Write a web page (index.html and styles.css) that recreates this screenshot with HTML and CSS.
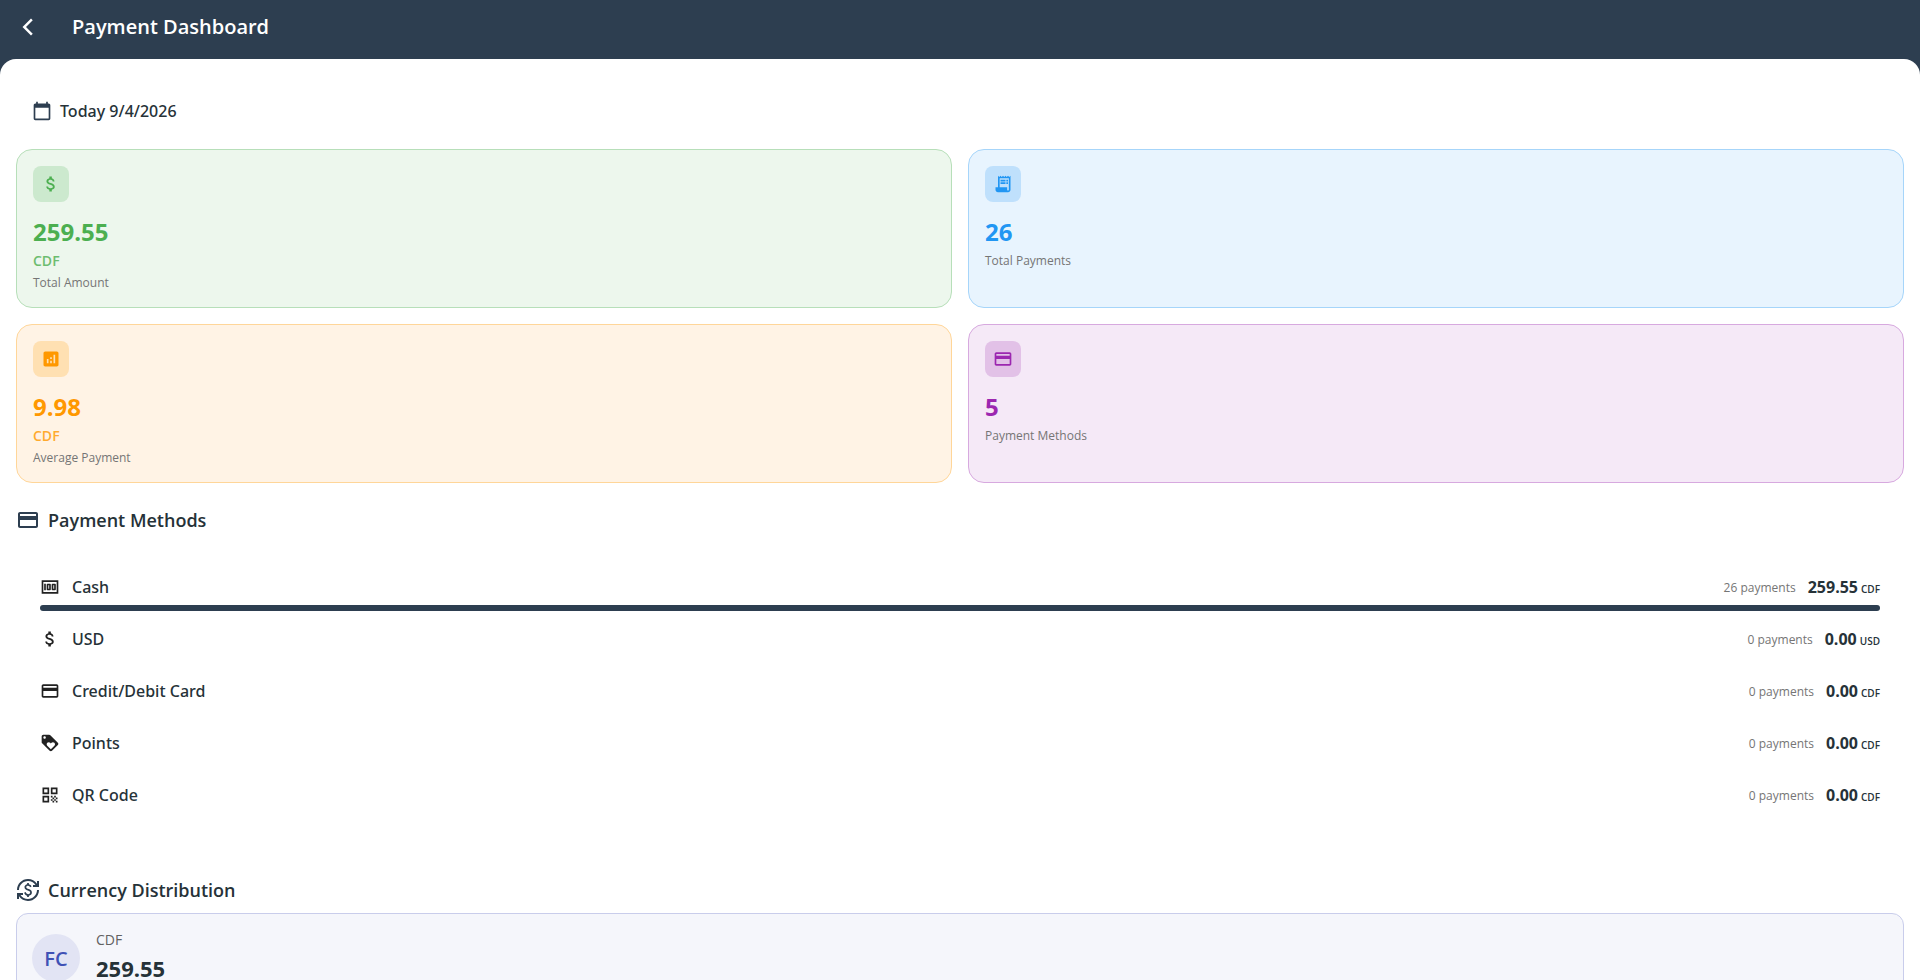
FILE: index.html
```html
<!DOCTYPE html>
<html lang="en">
<head>
    <meta charset="UTF-8">
    <meta name="viewport" content="width=device-width, initial-scale=1.0">
    <title>Payment Dashboard</title>
    <link rel="stylesheet" href="styles.css">
</head>
<body>
    <svg class="sprite" aria-hidden="true">
        <symbol id="icon-card" viewBox="0 0 24 24">
            <path d="M20 4H4c-1.11 0-1.99.89-1.99 2L2 18c0 1.11.89 2 2 2h16c1.11 0 2-.89 2-2V6c0-1.11-.89-2-2-2zm0 14H4v-6h16v6zm0-10H4V6h16v2z"/>
        </symbol>
        <symbol id="icon-dollar" viewBox="0 0 24 24">
            <path d="M11.8 10.9c-2.27-.59-3-1.2-3-2.15 0-1.09 1.01-1.85 2.7-1.85 1.78 0 2.44.85 2.5 2.1h2.21c-.07-1.72-1.12-3.3-3.21-3.81V3h-3v2.16c-1.94.42-3.5 1.68-3.5 3.61 0 2.31 1.91 3.46 4.7 4.13 2.5.6 3 1.48 3 2.41 0 .69-.49 1.79-2.7 1.79-2.06 0-2.87-.92-2.98-2.1h-2.2c.12 2.19 1.76 3.42 3.68 3.83V21h3v-2.15c1.95-.37 3.5-1.5 3.5-3.55 0-2.84-2.43-3.81-4.7-4.4z"/>
        </symbol>
    </svg>

    <header class="app-bar">
        <button class="back-btn" type="button" aria-label="Back">
            <svg class="icon" viewBox="0 0 24 24"><path d="M17.7 3.9 15.6 1.800 5.4 12l10.200 10.200 2.100-2.100L9.600 12z"/></svg>
        </button>
        <h1>Payment Dashboard</h1>
    </header>

    <main class="content">
        <button class="date-btn" type="button">
            <svg class="icon" viewBox="0 0 24 24"><path d="M20 3h-1V1h-2v2H7V1H5v2H4c-1.1 0-2 .9-2 2v16c0 1.1.9 2 2 2h16c1.1 0 2-.9 2-2V5c0-1.1-.9-2-2-2zm0 18H4V8h16v13z"/></svg>
            Today 9/4/2026
        </button>

        <section class="stats">
            <div class="stat green">
                <div class="stat-icon"><svg class="icon"><use href="#icon-dollar"/></svg></div>
                <div class="stat-value">259.55</div>
                <div class="stat-unit">CDF</div>
                <div class="stat-label">Total Amount</div>
            </div>
            <div class="stat blue">
                <div class="stat-icon">
                    <svg class="icon" viewBox="0 0 24 24"><path d="M19.5 3.5 18 2l-1.500 1.500L15 2l-1.500 1.500L12 2l-1.500 1.500L9 2 7.500 3.500 6 2v14H3v3c0 1.660 1.340 3 3 3h12c1.660 0 3-1.340 3-3V2l-1.500 1.500zM19 19c0 .55-.45 1-1 1s-1-.45-1-1v-3H8V5h11v14z"/><path d="M9 7h6v2H9zM16 7h2v2h-2zM9 10h6v2H9zM16 10h2v2h-2z"/></svg>
                </div>
                <div class="stat-value">26</div>
                <div class="stat-label">Total Payments</div>
            </div>
            <div class="stat orange">
                <div class="stat-icon">
                    <svg class="icon" viewBox="0 0 24 24"><path d="M19 3H5c-1.100 0-2 .9-2 2v14c0 1.100.9 2 2 2h14c1.100 0 2-.9 2-2V5c0-1.100-.9-2-2-2zM9 17H7v-5h2v5zm4 0h-2v-3h2v3zm0-5h-2v-2h2v2zm4 5h-2V7h2v10z"/></svg>
                </div>
                <div class="stat-value">9.98</div>
                <div class="stat-unit">CDF</div>
                <div class="stat-label">Average Payment</div>
            </div>
            <div class="stat purple">
                <div class="stat-icon"><svg class="icon"><use href="#icon-card"/></svg></div>
                <div class="stat-value">5</div>
                <div class="stat-label">Payment Methods</div>
            </div>
        </section>

        <section class="methods">
            <h2 class="section-title"><svg class="icon"><use href="#icon-card"/></svg>Payment Methods</h2>
            <ul class="method-list">
                <li class="method">
                    <div class="method-row">
                        <svg class="icon" viewBox="0 0 24 24"><path d="M15 16h3c.55 0 1-.45 1-1V9c0-.55-.45-1-1-1h-3c-.55 0-1 .45-1 1v6c0 .55.45 1 1 1zm1-6h1v4h-1v-4zM9 16h3c.55 0 1-.45 1-1V9c0-.55-.45-1-1-1H9c-.55 0-1 .45-1 1v6c0 .55.45 1 1 1zm1-6h1v4h-1v-4zM5 8h2v8H5zM2 4v16h20V4H2zm2 14V6h16v12H4z"/></svg>
                        <span class="method-name">Cash</span>
                        <span class="method-count">26 payments</span>
                        <span class="method-amount">259.55<small>CDF</small></span>
                    </div>
                    <div class="bar"><div class="bar-fill" style="width: 100%"></div></div>
                </li>
                <li class="method">
                    <div class="method-row">
                        <svg class="icon"><use href="#icon-dollar"/></svg>
                        <span class="method-name">USD</span>
                        <span class="method-count">0 payments</span>
                        <span class="method-amount">0.00<small>USD</small></span>
                    </div>
                    <div class="bar"><div class="bar-fill" style="width: 0%"></div></div>
                </li>
                <li class="method">
                    <div class="method-row">
                        <svg class="icon"><use href="#icon-card"/></svg>
                        <span class="method-name">Credit/Debit Card</span>
                        <span class="method-count">0 payments</span>
                        <span class="method-amount">0.00<small>CDF</small></span>
                    </div>
                    <div class="bar"><div class="bar-fill" style="width: 0%"></div></div>
                </li>
                <li class="method">
                    <div class="method-row">
                        <svg class="icon" viewBox="0 0 24 24"><path d="M21.410 11.580l-9-9C12.050 2.220 11.550 2 11 2H4c-1.100 0-2 .9-2 2v7c0 .55.22 1.050.59 1.420l9 9c.36.36.86.58 1.410.58.55 0 1.050-.22 1.410-.59l7-7c.37-.36.59-.86.59-1.410 0-.55-.23-1.060-.59-1.420zM5.500 7C4.670 7 4 6.330 4 5.500S4.670 4 5.500 4 7 4.670 7 5.500 6.330 7 5.500 7zm11.770 8.270L13 19.540l-4.270-4.270C8.280 14.810 8 14.190 8 13.500c0-1.380 1.120-2.500 2.500-2.500.69 0 1.320.28 1.770.74l.73.72.73-.73c.45-.45 1.080-.73 1.770-.73 1.380 0 2.500 1.120 2.500 2.500 0 .69-.28 1.320-.73 1.770z"/></svg>
                        <span class="method-name">Points</span>
                        <span class="method-count">0 payments</span>
                        <span class="method-amount">0.00<small>CDF</small></span>
                    </div>
                    <div class="bar"><div class="bar-fill" style="width: 0%"></div></div>
                </li>
                <li class="method">
                    <div class="method-row">
                        <svg class="icon" viewBox="0 0 24 24"><path d="M3 11h8V3H3v8zm2-6h4v4H5V5zM3 21h8v-8H3v8zm2-6h4v4H5v-4zM13 3v8h8V3h-8zm6 6h-4V5h4v4zM19 19h2v2h-2zM13 13h2v2h-2zM15 15h2v2h-2zM13 17h2v2h-2zM15 19h2v2h-2zM17 17h2v2h-2zM17 13h2v2h-2zM19 15h2v2h-2z"/></svg>
                        <span class="method-name">QR Code</span>
                        <span class="method-count">0 payments</span>
                        <span class="method-amount">0.00<small>CDF</small></span>
                    </div>
                    <div class="bar"><div class="bar-fill" style="width: 0%"></div></div>
                </li>
            </ul>
        </section>

        <section class="currencies">
            <h2 class="section-title">
                <svg class="icon" viewBox="0 0 24 24"><path d="M12.890 11.100c-1.780-.59-2.640-.96-2.640-1.900 0-1.020 1.110-1.390 1.810-1.390 1.310 0 1.790.99 1.900 1.340l1.580-.67c-.15-.44-.82-1.910-2.660-2.230V5h-1.750v1.260c-2.600.56-2.620 2.850-2.620 2.960 0 2.270 2.250 2.910 3.350 3.310 1.580.56 2.280 1.070 2.280 2.030 0 1.130-1.050 1.610-1.980 1.610-1.820 0-2.340-1.870-2.400-2.090l-1.660.67c.63 2.190 2.280 2.780 3.020 2.960V19h1.750v-1.240c.52-.09 3.020-.59 3.020-3.220.01-1.390-.6-2.610-3-3.440zM3 21H1v-6h6v2H4.520c1.610 2.410 4.360 4 7.480 4 4.970 0 9-4.030 9-9h2c0 6.080-4.920 11-11 11-3.720 0-7.010-1.850-9-4.670V21zM1 12C1 5.920 5.920 1 12 1c3.720 0 7.010 1.850 9 4.670V3h2v6h-6V7h2.480C17.870 4.590 15.120 3 12 3c-4.970 0-9 4.030-9 9H1z"/></svg>
                Currency Distribution
            </h2>
            <div class="currency">
                <div class="currency-badge">FC</div>
                <div class="currency-info">
                    <div class="currency-code">CDF</div>
                    <div class="currency-total">259.55</div>
                </div>
            </div>
        </section>
    </main>
</body>
</html>
```
FILE: styles.css
```css
* {
    box-sizing: border-box;
}

body {
    margin: 0;
    height: 100vh;
    display: flex;
    flex-direction: column;
    overflow: hidden;
    background-color: #2d3e50;
    color: #263238;
    font-family: "Segoe UI", "Open Sans", "Noto Sans", sans-serif;
    font-size: 16px;
}

h1,
h2,
ul {
    margin: 0;
    padding: 0;
}

button {
    padding: 0;
    border: none;
    background: none;
    color: inherit;
    font: inherit;
    cursor: pointer;
}

.sprite {
    display: none;
}

.icon {
    width: 20px;
    height: 20px;
    flex: none;
    fill: currentColor;
}

.app-bar {
    display: flex;
    align-items: center;
    gap: 24px;
    flex: none;
    padding: 3px 8px 8px;
    color: #fff;
}

.back-btn {
    width: 40px;
    height: 48px;
    display: flex;
    align-items: center;
    justify-content: center;
}

.app-bar h1 {
    font-size: 20px;
    font-weight: 600;
    line-height: 32px;
}

.content {
    flex: 1;
    padding: 32px 16px 16px;
    overflow-y: auto;
    scrollbar-width: none;
    background-color: #fff;
    border-radius: 16px 16px 0 0;
}

.date-btn {
    display: flex;
    align-items: center;
    gap: 8px;
    padding: 8px 16px;
    font-family: "Segoe UI", "Noto Sans", sans-serif;
    line-height: 24px;
    font-weight: 500;
}

.date-btn .icon,
.section-title .icon {
    color: #2d3e50;
}

/* Stat cards */
.stats {
    display: grid;
    grid-template-columns: 1fr 1fr;
    gap: 16px;
    margin: 18px 0 24px;
}

.stat {
    padding: 16px;
    border: 1px solid;
    border-radius: 16px;
}

.stat-icon {
    width: 36px;
    height: 36px;
    display: flex;
    align-items: center;
    justify-content: center;
    margin-bottom: 12px;
    border-radius: 8px;
}

.stat-value {
    margin-bottom: 2px;
    font-size: 24px;
    font-weight: 700;
    line-height: 36px;
}

.stat-unit {
    margin-bottom: 4px;
    font-size: 14px;
    font-weight: 600;
    line-height: 18px;
    opacity: 0.8;
}

.stat-label {
    color: #757575;
    font-size: 12px;
    line-height: 17px;
}

.green {
    color: #4caf50;
    background-color: #edf7ed;
    border-color: #b7dfb9;
}

.green .stat-icon {
    background-color: #cce9ce;
}

.blue {
    color: #2196f3;
    background-color: #e8f4fe;
    border-color: #a6d5fa;
}

.blue .stat-icon {
    background-color: #bfe0fc;
}

.orange {
    color: #ff9800;
    background-color: #fff3e5;
    border-color: #ffd699;
}

.orange .stat-icon {
    background-color: #ffe0b2;
}

.purple {
    color: #9c27b0;
    background-color: #f5e9f7;
    border-color: #d7a9df;
}

.purple .stat-icon {
    background-color: #e2c1e7;
}

/* Payment methods */
.section-title {
    display: flex;
    align-items: center;
    gap: 8px;
    font-size: 18px;
    font-weight: 600;
    line-height: 26px;
}

.section-title .icon {
    width: 24px;
    height: 24px;
}

.method-list {
    padding: 42px 24px 24px;
    list-style: none;
}

.method {
    padding-bottom: 16px;
}

.method-row {
    display: flex;
    align-items: center;
    height: 24px;
    margin-bottom: 6px;
}

.method-row .icon {
    color: #212121;
}

.method-name {
    flex: 1;
    margin-left: 12px;
    font-family: "Segoe UI", "Noto Sans", sans-serif;
    font-weight: 500;
}

.method-count {
    margin-right: 12px;
    color: #757575;
    font-size: 12px;
}

.method-amount {
    font-weight: 700;
}

.method-amount small {
    margin-left: 3px;
    font-size: 10px;
    font-weight: 600;
}

.bar {
    height: 6px;
}

.bar-fill {
    height: 100%;
    border-radius: 3px;
    background-color: #2d3e50;
}

/* Currency distribution */
.currencies {
    margin-top: 18px;
}

.currency {
    display: flex;
    align-items: center;
    gap: 16px;
    margin-top: 10px;
    padding: 16px 15px;
    border: 1px solid #c9cdeb;
    border-radius: 12px;
    background-color: #f5f6fb;
}

.currency-badge {
    width: 48px;
    height: 48px;
    border-radius: 50%;
    background-color: #e2e4f4;
    color: #3f51b5;
    font-size: 20px;
    font-weight: 600;
    line-height: 50px;
    text-align: center;
}

.currency-code {
    color: #616161;
    font-size: 14px;
    line-height: 20px;
}

.currency-total {
    font-size: 22px;
    font-weight: 700;
    line-height: 36px;
}
```
